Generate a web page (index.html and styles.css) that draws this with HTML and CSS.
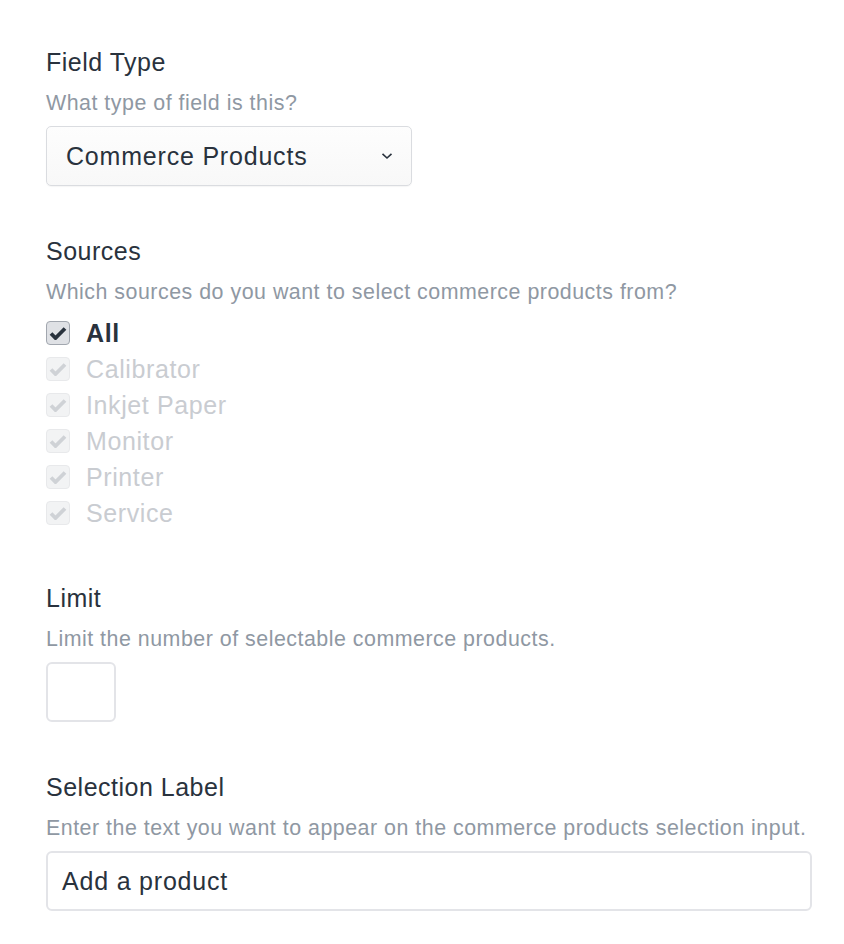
FILE: index.html
```html
<!DOCTYPE html>
<html>
<head>
<meta charset="utf-8">
<link rel="stylesheet" href="styles.css">
</head>
<body>
<div class="form">
  <div class="field">
    <div class="label">Field Type</div>
    <div class="desc">What type of field is this?</div>
    <div class="select">
      <span>Commerce Products</span>
      <svg class="chev" width="12" height="8" viewBox="0 0 12 8"><path d="M1.5 1.8 L6 6 L10.5 1.8" fill="none" stroke="#29323d" stroke-width="1.6"/></svg>
    </div>
  </div>
  <div class="field">
    <div class="label">Sources</div>
    <div class="desc">Which sources do you want to select commerce products from?</div>
    <div class="checks">
      <div class="check on"><span class="box"><svg width="18" height="14" viewBox="0 0 18 14"><path d="M2 7.5 L6.5 12 L16 2.5" fill="none" stroke="currentColor" stroke-width="3.8"/></svg></span><span class="ctext">All</span></div>
      <div class="check off"><span class="box"><svg width="18" height="14" viewBox="0 0 18 14"><path d="M2 7.5 L6.5 12 L16 2.5" fill="none" stroke="currentColor" stroke-width="3.8"/></svg></span><span class="ctext">Calibrator</span></div>
      <div class="check off"><span class="box"><svg width="18" height="14" viewBox="0 0 18 14"><path d="M2 7.5 L6.5 12 L16 2.5" fill="none" stroke="currentColor" stroke-width="3.8"/></svg></span><span class="ctext">Inkjet Paper</span></div>
      <div class="check off"><span class="box"><svg width="18" height="14" viewBox="0 0 18 14"><path d="M2 7.5 L6.5 12 L16 2.5" fill="none" stroke="currentColor" stroke-width="3.8"/></svg></span><span class="ctext">Monitor</span></div>
      <div class="check off"><span class="box"><svg width="18" height="14" viewBox="0 0 18 14"><path d="M2 7.5 L6.5 12 L16 2.5" fill="none" stroke="currentColor" stroke-width="3.8"/></svg></span><span class="ctext">Printer</span></div>
      <div class="check off"><span class="box"><svg width="18" height="14" viewBox="0 0 18 14"><path d="M2 7.5 L6.5 12 L16 2.5" fill="none" stroke="currentColor" stroke-width="3.8"/></svg></span><span class="ctext">Service</span></div>
    </div>
  </div>
  <div class="field">
    <div class="label">Limit</div>
    <div class="desc">Limit the number of selectable commerce products.</div>
    <div class="input small"></div>
  </div>
  <div class="field">
    <div class="label">Selection Label</div>
    <div class="desc">Enter the text you want to appear on the commerce products selection input.</div>
    <div class="input wide">Add a product</div>
  </div>
</div>
</body>
</html>
```

FILE: styles.css
```css
html, body {
  margin: 0;
  padding: 0;
  background: #ffffff;
}
body {
  font-family: "Liberation Sans", Arial, sans-serif;
  color: #29323d;
}
.form {
  width: 766px;
  margin-left: 46px;
  padding-top: 46px;
  display: flex;
  flex-direction: column;
  gap: 49px;
}
.field {
  display: flex;
  flex-direction: column;
}
.label {
  font-size: 25px;
  letter-spacing: 0.5px;
  line-height: 32px;
  margin-bottom: 11px;
}
.desc {
  font-size: 21.4px;
  letter-spacing: 0.5px;
  line-height: 28px;
  color: #8f98a3;
  margin-bottom: 9px;
}
.select {
  width: 366px;
  height: 60px;
  box-sizing: border-box;
  border: 1px solid #dadce0;
  border-radius: 5px;
  background: linear-gradient(#fdfdfd, #f8f8f8);
  box-shadow: 0 1px 1px rgba(0,0,0,0.04);
  display: flex;
  align-items: center;
  justify-content: space-between;
  padding: 0 18px 0 19px;
  font-size: 25px;
  letter-spacing: 0.8px;
}
.checks {
  display: flex;
  flex-direction: column;
  margin-bottom: 2px;
}
.check {
  height: 36px;
  display: flex;
  align-items: center;
  gap: 16px;
  font-size: 25px;
  letter-spacing: 0.6px;
}
.box {
  width: 24px;
  height: 24px;
  box-sizing: border-box;
  border-radius: 4px;
  display: flex;
  align-items: center;
  justify-content: center;
}
.check.on .box {
  background: #dfe1e5;
  border: 1px solid #a2a7af;
  color: #29323d;
}
.check.on .ctext {
  font-weight: bold;
}
.check.off .box {
  background: #f2f3f4;
  border: 1px solid #e8e9eb;
  color: #cfd2d6;
}
.check.off .ctext {
  color: #c9ccd1;
}
.input {
  height: 60px;
  box-sizing: border-box;
  border: 2px solid #e3e4e8;
  border-radius: 6px;
  background: #fff;
  font-size: 25px;
  letter-spacing: 0.8px;
  display: flex;
  align-items: center;
  padding: 0 14px;
}
.input.small {
  width: 70px;
}
.input.wide {
  width: 766px;
}
```
